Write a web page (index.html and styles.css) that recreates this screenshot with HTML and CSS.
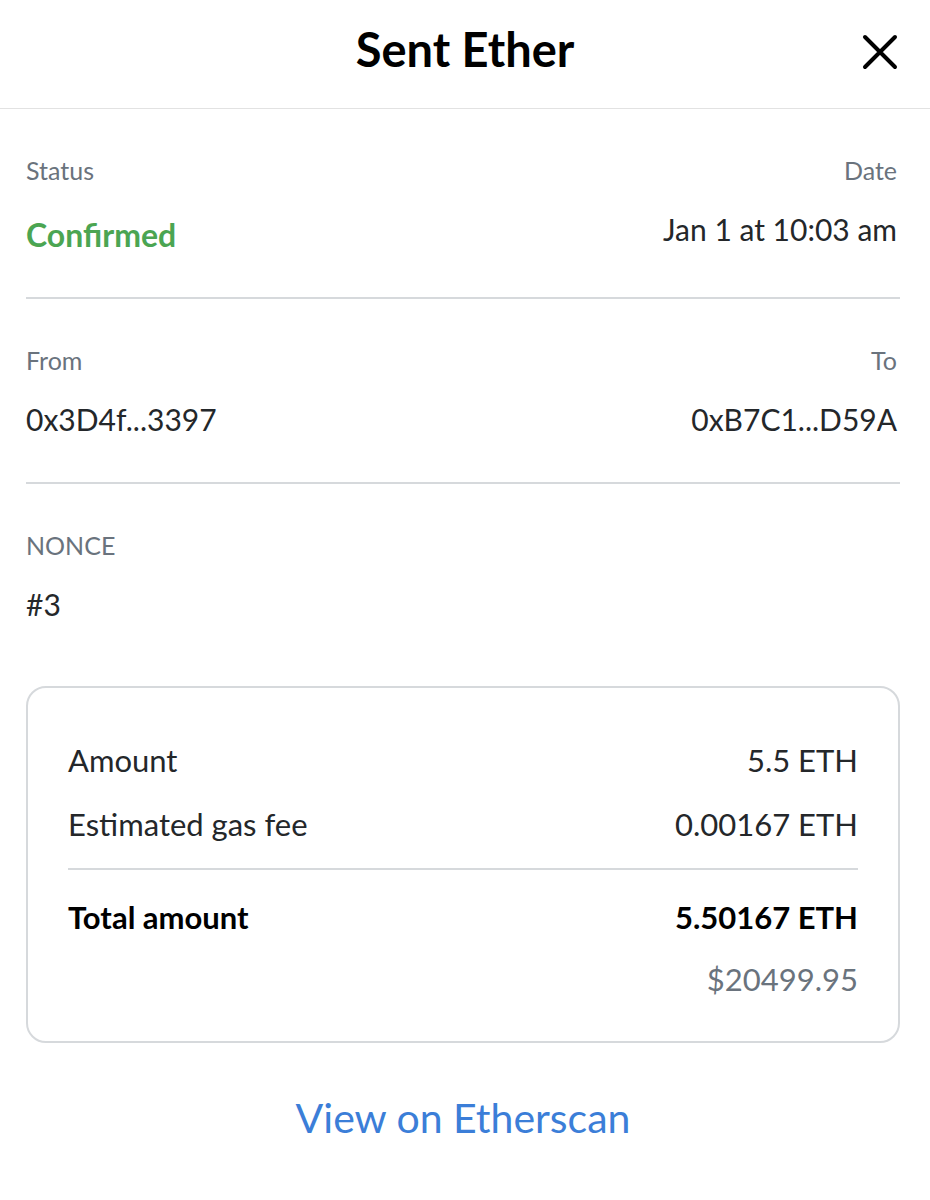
FILE: index.html
```html
<!DOCTYPE html>
<html lang="en">
<head>
    <meta charset="UTF-8">
    <title>Sent Ether</title>
    <link rel="stylesheet" href="styles.css">
</head>
<body>
    <div class="header">
        <span></span>
        <h1>Sent Ether</h1>
        <button class="close" aria-label="Close">
            <svg width="36" height="36" viewBox="0 0 36 36">
                <path d="M3 3 L33 33 M33 3 L3 33" stroke="#000" stroke-width="4" stroke-linecap="round"/>
            </svg>
        </button>
    </div>

    <div class="content">
        <div class="section">
            <div class="col">
                <div class="label">Status</div>
                <div class="value confirmed">Confirmed</div>
            </div>
            <div class="col right">
                <div class="label">Date</div>
                <div class="value">Jan 1 at 10:03 am</div>
            </div>
        </div>

        <div class="section">
            <div class="col">
                <div class="label">From</div>
                <div class="value">0x3D4f...3397</div>
            </div>
            <div class="col right">
                <div class="label">To</div>
                <div class="value">0xB7C1...D59A</div>
            </div>
        </div>

        <div class="section last">
            <div class="col">
                <div class="label">NONCE</div>
                <div class="value">#3</div>
            </div>
        </div>

        <!-- 金额汇总 -->
        <div class="summary">
            <div class="row">
                <span>Amount</span>
                <span>5.5 ETH</span>
            </div>
            <div class="row">
                <span>Estimated gas fee</span>
                <span>0.00167 ETH</span>
            </div>
            <div class="row total">
                <span>Total amount</span>
                <span>5.50167 ETH</span>
            </div>
            <div class="row fiat">
                <span></span>
                <span>$20499.95</span>
            </div>
        </div>

        <a class="etherscan" href="#">View on Etherscan</a>
    </div>
</body>
</html>
```

FILE: styles.css
```css
body {
    font-family: Lato, "Noto Sans", sans-serif;
    background-color: #fff;
    color: #24272a;
    margin: 0;
}
.header {
    display: grid;
    grid-template-columns: 1fr auto 1fr;
    align-items: center;
    height: 108px;
    border-bottom: 1px solid #e2e2e2;
    padding: 0 32px;
}
h1 {
    margin: 0;
    font-size: 47px;
    line-height: 56px;
    font-weight: 700;
    color: #000;
    padding-bottom: 10px;
}
.close {
    justify-self: end;
    background: none;
    border: none;
    padding: 0;
    margin-top: -4px;
    cursor: pointer;
    display: flex;
}
.content {
    padding: 0 30px 0 26px;
}
.section {
    display: flex;
    justify-content: space-between;
    padding: 46px 0 45px;
    border-bottom: 2px solid #d6d9dc;
}
.section:first-child {
    padding-bottom: 44px;
}
.section.last {
    border-bottom: none;
    padding-bottom: 0;
}
.col.right {
    text-align: right;
    padding-right: 3px;
}
.label {
    font-size: 25px;
    line-height: 30px;
    color: #6a737d;
}
.value {
    font-size: 30px;
    line-height: 36px;
    margin-top: 26px;
    color: #24272a;
}
.value.confirmed {
    color: #4ba552;
    font-weight: 700;
    font-size: 32px;
    margin-top: 32px;
}
.summary {
    margin-top: 64px;
    border: 2px solid #d6d9dc;
    border-radius: 20px;
    padding: 54px 40px 44px;
}
.row {
    display: flex;
    justify-content: space-between;
    font-size: 31px;
    line-height: 36px;
    color: #24272a;
}
.row + .row {
    margin-top: 28px;
}
.row.total {
    font-weight: 700;
    color: #000;
    border-top: 2px solid #d6d9dc;
    margin-top: 26px;
    padding-top: 29px;
}
.row.fiat {
    color: #6a737d;
    margin-top: 26px;
}
.etherscan {
    display: block;
    text-align: center;
    margin-top: 51px;
    font-size: 41px;
    line-height: 48px;
    color: #3b7ed8;
    text-decoration: none;
}
```
